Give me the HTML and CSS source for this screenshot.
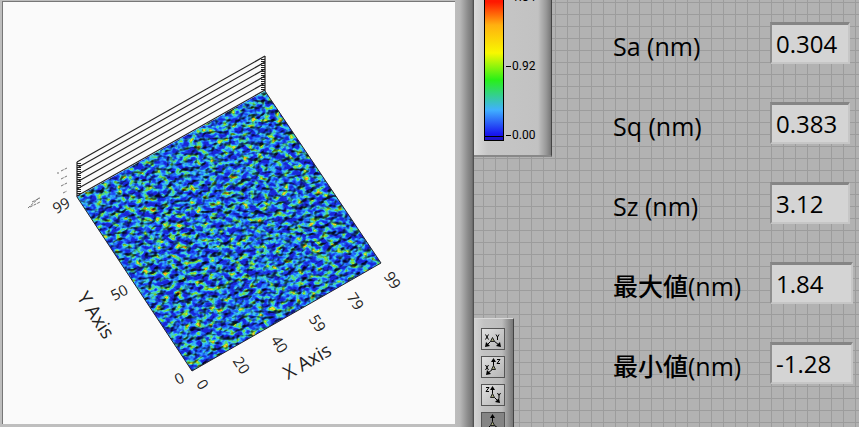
FILE: index.html
```html
<!DOCTYPE html>
<html lang="ja">
<head>
  <meta charset="UTF-8" />
  <meta name="viewport" content="width=device-width, initial-scale=1.0"/>
  <title>Surface Roughness</title>
  <link rel="stylesheet" href="styles.css">
</head>
<body>
<main class="panel">
  <section class="graph">
    <svg class="plot" viewBox="0 0 452 422" preserveAspectRatio="xMinYMin meet" role="img" aria-label="3D surface">
      <defs>
        <filter id="rough" x="0" y="0" width="100%" height="100%" color-interpolation-filters="sRGB">
          <feTurbulence type="fractalNoise" baseFrequency="0.15 0.19" numOctaves="2" seed="7" result="noise"/>
          <feColorMatrix in="noise" type="matrix" values="2 0 0 0 -0.68  2 0 0 0 -0.68  2 0 0 0 -0.68  0 0 0 0 1" result="level"/>
          <feComponentTransfer in="level" result="ramp">
            <feFuncR type="table" tableValues="0.1 0.11 0.13 0.18 0.25 0.3 0.5 0.95 1"/>
            <feFuncG type="table" tableValues="0.15 0.25 0.4 0.62 0.82 0.85 0.88 0.85 0.6"/>
            <feFuncB type="table" tableValues="0.85 0.92 0.98 1 0.9 0.55 0.2 0.2 0.1"/>
          </feComponentTransfer>
          <feColorMatrix in="noise" type="matrix" values="0 0 0 0 0  0 0 0 0 0  0 0 0 0 0  0 0.9 0 0 0" result="height"/>
          <feDiffuseLighting in="height" surfaceScale="5" diffuseConstant="1.35" lighting-color="#fff" result="light">
            <feDistantLight azimuth="235" elevation="50"/>
          </feDiffuseLighting>
          <feComposite in="ramp" in2="light" operator="arithmetic" k1="0.85" k2="0.15" k3="0" k4="0"/>
        </filter>
        <clipPath id="sheet">
          <path d="M262 89 L378 261 L189 369 L74 195 Z"/>
        </clipPath>
      </defs>
      <g class="wall">
        <path d="M74 160 L262 54 M74 166 L262 60 M74 173 L262 67 M74 180 L262 74 M74 187 L262 81 M74 194 L262 88"/>
        <path d="M74 160 V195 M262 54 V89"/>
        <path class="ticks" d="M76 161 V194 M260 57 V89"/>
      </g>
      <g clip-path="url(#sheet)">
        <rect x="70" y="80" width="314" height="294" filter="url(#rough)"/>
      </g>
      <path class="edge" d="M262 89 L378 261 L189 369 L74 195"/>
      <g class="scale">
        <text transform="translate(58 203) rotate(-28)">99</text>
        <text transform="translate(116 290) rotate(-28)">50</text>
        <text transform="translate(176 376) rotate(-28)">0</text>
        <text transform="translate(200 382) rotate(57)">0</text>
        <text transform="translate(239 363) rotate(57)">20</text>
        <text transform="translate(277 342) rotate(57)">40</text>
        <text transform="translate(315 321) rotate(57)">59</text>
        <text transform="translate(353 299) rotate(57)">79</text>
        <text transform="translate(390 278) rotate(57)">99</text>
      </g>
      <g class="axis">
        <text transform="translate(93 313) rotate(57)">Y Axis</text>
        <text transform="translate(304 359) rotate(-30)">X Axis</text>
      </g>
      <path class="specks" d="M54 171 h2 M58 169 l6 -3 M58 177 l6 -3 M58 184 l6 -3 M60 191 l4 -2 M25 206 l12 -11 M27 205 l10 -5 M29 200 l8 -4"/>
    </svg>
  </section>

  <section class="side">
    <aside class="tools">
      <div class="ramp">
        <div class="ramp-bar"></div>
        <ul class="ramp-scale">
          <li>1.84</li>
          <li>0.92</li>
          <li>0.00</li>
        </ul>
      </div>
      <div class="views">
        <button class="view" type="button" aria-label="XY plane">
          <svg viewBox="0 0 22 20">
            <path class="sign" d="M3.500 5.500 l3 5 M6.500 5.500 l-3 5 M14 5.500 l1.500 2.500 1.500 -2.500 M15.500 8 v3"/>
            <path class="axes" d="M9 12 L5 16 M12 12 L17 16"/>
            <path class="tip" d="M3 18 l1 -5 4 4 z M19 18 l-5 -1 4 -4 z"/>
            <path class="cube" d="M8.500 12.500 l2 -4 2 4 z"/>
          </svg>
        </button>
        <button class="view" type="button" aria-label="XZ plane">
          <svg viewBox="0 0 22 20">
            <path class="sign" d="M3.500 8 l3 5 M6.500 8 l-3 5 M15 2.500 h3 l-3 4 h3"/>
            <path class="axes" d="M11.500 10 V4 M11 12 L6 16"/>
            <path class="tip" d="M9 5 h5 l-2.500 -4 z M4 18 l1 -5 4 4 z"/>
            <path class="cube" d="M9.500 12.500 l2 -4 2 4 z"/>
          </svg>
        </button>
        <button class="view" type="button" aria-label="YZ plane">
          <svg viewBox="0 0 22 20">
            <path class="sign" d="M4 2.500 h3 l-3 4 h3 M15.500 8 l1.500 2.500 1.500 -2.500 M17 10.500 v3"/>
            <path class="axes" d="M10.500 10 V4 M12 12 L16 16"/>
            <path class="tip" d="M8 5 h5 l-2.500 -4 z M18 18 l-5 -1 4 -4 z"/>
            <path class="cube" d="M8.500 12.500 l2 -4 2 4 z"/>
          </svg>
        </button>
        <button class="view active" type="button" aria-label="3D view">
          <svg viewBox="0 0 22 20">
            <path class="axes" d="M10.500 10 V4 M9 12 L5 16 M12 12 L17 16"/>
            <path class="tip" d="M8 5 h5 l-2.500 -4 z"/>
            <path class="cube" d="M8.500 12.500 l2 -4 2 4 z"/>
          </svg>
        </button>
      </div>
    </aside>

    <form class="results">
      <div class="row">
        <label for="sa">Sa (nm)</label>
        <input id="sa" type="text" value="0.304" readonly>
      </div>
      <div class="row">
        <label for="sq">Sq (nm)</label>
        <input id="sq" type="text" value="0.383" readonly>
      </div>
      <div class="row">
        <label for="sz">Sz (nm)</label>
        <input id="sz" type="text" value="3.12" readonly>
      </div>
      <div class="row">
        <label for="max">最大値(nm)</label>
        <input id="max" class="wide" type="text" value="1.84" readonly>
      </div>
      <div class="row">
        <label for="min">最小値(nm)</label>
        <input id="min" class="wide" type="text" value="-1.28" readonly>
      </div>
    </form>
  </section>
</main>
</body>
</html>
```
FILE: styles.css
```css
* {
  box-sizing: border-box;
}

html, body {
  margin: 0;
  padding: 0;
  height: 100%;
  overflow: hidden;
  background: #b2b2b2;
  font-family: "Open Sans", "Noto Sans CJK JP", sans-serif;
  color: #000;
}

.panel {
  display: grid;
  grid-template-columns: 474fr 385fr;
  height: 100%;
}

/* 3D graph */
.graph {
  min-width: 0;
  padding: 1px 19px 3px 2px;
  background: linear-gradient(to left, #444 0, #777 2px, #8a8a8a 6px, #b8b8b8 14px, #bebebe 20px);
  overflow: hidden;
}

.plot {
  display: block;
  width: 100%;
  height: 100%;
  background: #fafafa;
  border: 1px solid #777;
  border-right: none;
  border-bottom: none;
}

.wall path {
  fill: none;
  stroke: #222;
  stroke-width: 1.2;
}

.wall .ticks {
  stroke-width: 4;
  stroke-dasharray: 1 1;
}

.edge {
  fill: none;
  stroke: #223;
  stroke-width: 1;
}

.specks {
  fill: none;
  stroke: #777;
  stroke-width: 1;
  stroke-dasharray: 3 1;
}

.scale text, .axis text {
  text-anchor: middle;
  dominant-baseline: central;
  fill: #222;
}

.scale text {
  font-size: 15px;
}

.axis text {
  font-size: 19px;
}

/* Right side */
.side {
  display: flex;
  min-width: 0;
  min-height: 0;
  background-color: #b2b2b2;
  background-image:
    linear-gradient(to right, #9c9c9c 1px, transparent 1px),
    linear-gradient(to bottom, #9c9c9c 1px, transparent 1px);
  background-size: 12px 12px;
  background-position: 9px 2px;
}

.tools {
  display: flex;
  flex-direction: column;
  align-items: flex-start;
  gap: 161px;
  width: 78px;
}

.ramp {
  display: flex;
  align-items: flex-end;
  flex-shrink: 0;
  gap: 2px;
  width: 78px;
  height: 157px;
  padding: 0 0 14px 10px;
  overflow: hidden;
  border-right: 1px solid #444;
  border-bottom: 2px solid #888;
  background: linear-gradient(to right, #dcdcdc 0, #c6c6c6 14px, #c2c2c2 64px, #999 72px, #777 100%);
}

.ramp-bar {
  width: 20px;
  height: 160px;
  border: 1px solid #000;
  background:
    linear-gradient(#000, #000) 0 calc(100% - 3px) / 100% 1px no-repeat,
    linear-gradient(to top, #2010c0 0, #1818f0 6px, #40b0ff 30px, #28f018 60px, #f8f800 87px, #ffb010 115px, #ff1800 138px);
}

.ramp-scale {
  display: flex;
  flex-direction: column;
  gap: 57px;
  margin: 0;
  padding: 0;
  list-style: none;
  font-family: Roboto, sans-serif;
  font-size: 12px;
  line-height: 12px;
}

.ramp-scale li {
  display: flex;
  align-items: center;
}

.ramp-scale li::before {
  content: "";
  width: 5px;
  height: 1px;
  margin-right: 1px;
  background: #000;
}

.views {
  display: flex;
  flex-direction: column;
  flex-shrink: 0;
  gap: 6px;
  width: 40px;
  padding: 9px 7px;
  border-top: 1px solid #d8d8d8;
  border-right: 1px solid #444;
  background: linear-gradient(to right, #d4d4d4 0, #c2c2c2 10px, #bcbcbc 28px, #888 36px, #777 100%);
}

.view {
  width: 24px;
  height: 22px;
  padding: 0;
  border: 1px solid #555;
  background: linear-gradient(135deg, #e0e0e0, #b4b4b4);
}

.view.active {
  background: #848484;
}

.view svg {
  display: block;
  width: 22px;
  height: 20px;
}

.sign, .axes {
  fill: none;
  stroke: #000;
  stroke-width: 1;
}

.cube {
  fill: #a5a878;
  stroke: #222;
  stroke-width: 1;
}

/* Values */
.results {
  display: flex;
  flex-direction: column;
  gap: 38px;
  flex: 1;
  min-width: 0;
  padding: 22px 0 0 61px;
}

.row {
  display: flex;
  align-items: center;
  height: 42px;
}

.row label {
  flex: 0 0 157px;
  padding-top: 6px;
  font-size: 25px;
  font-weight: 500;
  line-height: 32px;
  white-space: nowrap;
}

.row input {
  width: 80px;
  height: 42px;
  padding: 0 0 0 4px;
  border: 2px solid;
  border-width: 3px 2px 2px 2px;
  border-color: #858585 #c6c6c6 #c6c6c6 #8e8e8e;
  border-radius: 0;
  outline: none;
  background: #d4d4d4;
  color: #000;
  font-family: inherit;
  font-size: 24px;
  font-weight: 500;
}

.row .wide {
  width: 83px;
}
```
